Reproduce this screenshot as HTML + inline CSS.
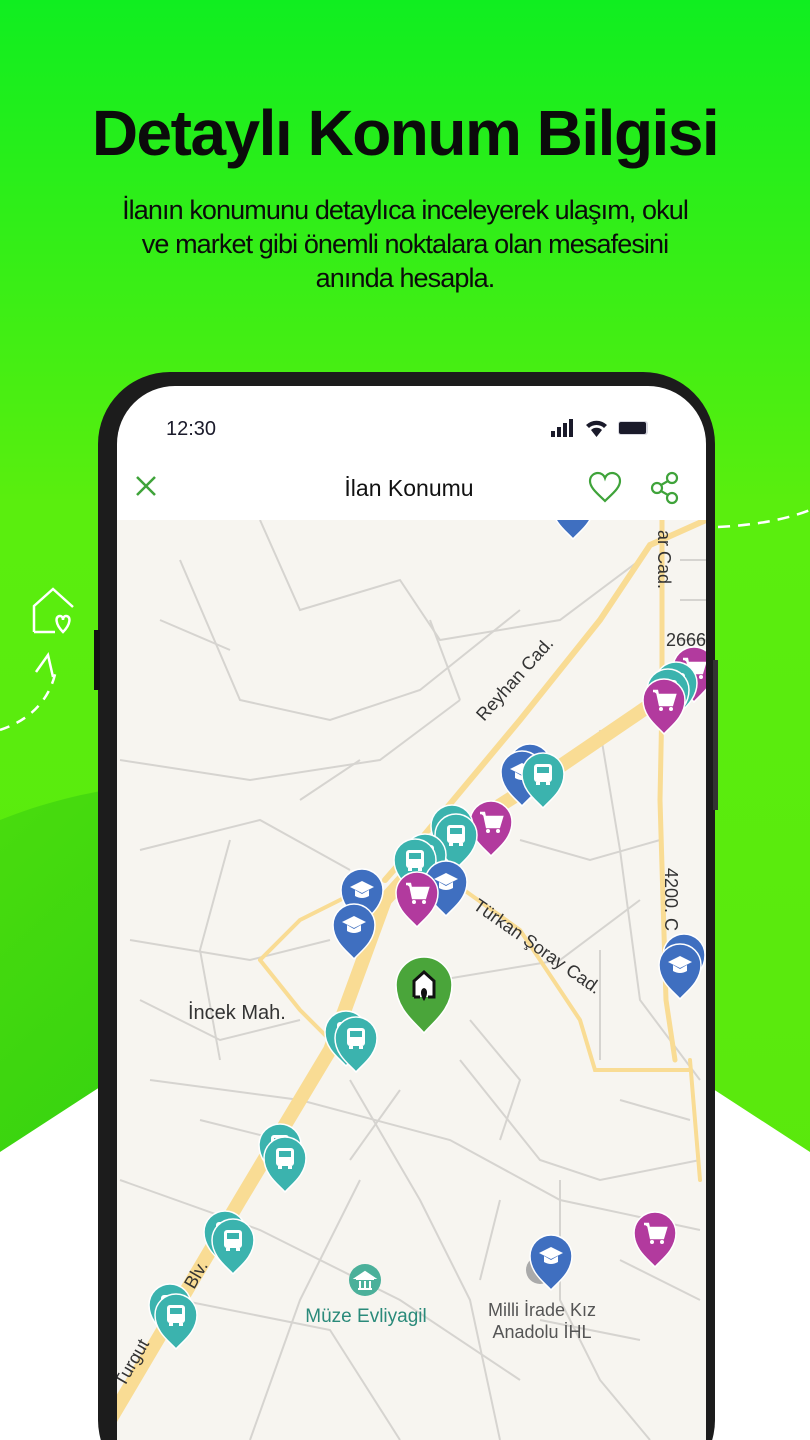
<!DOCTYPE html>
<html><head><meta charset="utf-8"><style>
*{margin:0;padding:0;box-sizing:border-box}
body{width:810px;height:1440px;overflow:hidden;position:relative;font-family:"Liberation Sans",sans-serif;background:#fff}
.bg{position:absolute;left:0;top:0;width:810px;height:1440px}
h1{position:absolute;top:96px;left:0;width:810px;text-align:center;font-size:64px;font-weight:bold;color:#0b0b0b;letter-spacing:-1.5px}
p.sub{position:absolute;top:193px;left:0;width:810px;text-align:center;font-size:27px;line-height:34px;color:#0b0b0b;letter-spacing:-0.9px}
</style></head><body>
<svg class="bg" viewBox="0 0 810 1440" xmlns="http://www.w3.org/2000/svg">
<defs>
<linearGradient id="g" x1="0" y1="0" x2="0" y2="1"><stop offset="0" stop-color="#10ee20"/><stop offset="0.35" stop-color="#5aee0e"/><stop offset="1" stop-color="#5ae60c"/></linearGradient>
<linearGradient id="g2" x1="0" y1="0" x2="1" y2="1"><stop offset="0" stop-color="#45d80e"/><stop offset="1" stop-color="#22c812"/></linearGradient>
</defs>
<rect width="810" height="1440" fill="url(#g)"/>
<path d="M0,820 C150,760 300,780 400,840 L100,1087 L0,1152Z" fill="url(#g2)" opacity="0.8"/>
<path d="M0,1152 L100,1087 L710,1087 L810,1152 L810,1440 L0,1440Z" fill="#fff"/>
<path d="M0,730 C30,720 50,700 56,670" stroke="#fff" stroke-width="2.5" fill="none" stroke-dasharray="10,8"/>
<path d="M36,672 L48,655 L53,677" stroke="#fff" stroke-width="2.5" fill="none"/>
<path d="M718,527 C760,525 790,518 810,510" stroke="#fff" stroke-width="2.5" fill="none" stroke-dasharray="12,8"/>
<g stroke="#fff" stroke-width="2.5" fill="none"><path d="M34,632 L34,606 L53,589 L73,607"/><path d="M34,632 L55,632"/><path d="M63,632 C55,624 55,616 60,616 C62,616 63,618 63,620 C63,618 64,616 66,616 C71,616 71,624 63,632Z"/></g>
<rect x="98" y="372" width="617" height="1120" rx="72" fill="#1c1c1c"/>
<rect x="94" y="630" width="6" height="60" fill="#111"/><rect x="713" y="660" width="5" height="150" fill="#333"/>
<rect x="117" y="386" width="589" height="1100" rx="58" fill="#fff"/>
<text x="166" y="435" font-size="20" fill="#1a1a2a" font-family="Liberation Sans">12:30</text>
<g fill="#1a1a2a"><rect x="551" y="431" width="4" height="6"/><rect x="557" y="427" width="4" height="10"/><rect x="563" y="423" width="4" height="14"/><rect x="569" y="419" width="4" height="18"/>
<path d="M586,425 A15,15 0 0 1 607,425 L604,428 A11,11 0 0 0 589,428Z"/><path d="M591,430 A8,8 0 0 1 602,430 L596.5,437Z"/>
<rect x="618" y="421" width="30" height="14" rx="3" fill="#d8d8e0"/><rect x="619" y="422" width="27" height="12" rx="2"/></g>
<path d="M137,477 L155,495 M155,477 L137,495" stroke="#3fa33a" stroke-width="2.5"/>
<text x="409" y="496" font-size="23" text-anchor="middle" fill="#111" font-family="Liberation Sans">İlan Konumu</text>
<path d="M605,501 C598,494 590,488 590,481 C590,476 594,473 598,473 C601,473 604,475 605,478 C606,475 609,473 612,473 C616,473 620,476 620,481 C620,488 612,494 605,501Z" stroke="#3fa33a" stroke-width="2.2" fill="none"/>
<g stroke="#3fa33a" stroke-width="2.2" fill="none"><circle cx="672" cy="478" r="5"/><circle cx="657" cy="488" r="5"/><circle cx="672" cy="498" r="5"/><path d="M661,485 L668,481 M661,491 L668,495"/></g>
<clipPath id="mc"><path d="M117,520 H706 V1440 H117Z"/></clipPath>
<g clip-path="url(#mc)">
<rect x="117" y="520" width="589" height="920" fill="#f7f5f0"/>
<g stroke="#d6d4d0" stroke-width="2" fill="none">
<path d="M260,520 L300,610 L400,580 L440,640 L560,620 L640,560"/><path d="M180,560 L240,700 L330,720 L420,690 L520,610"/>
<path d="M120,760 L250,780 L380,760 L460,700"/><path d="M140,850 L260,820 L350,870"/><path d="M130,940 L250,960 L330,940"/>
<path d="M150,1080 L300,1100 L450,1140 L560,1200 L700,1230"/><path d="M120,1180 L260,1230 L400,1300 L520,1380"/>
<path d="M350,1080 L420,1200 L470,1300 L500,1440"/><path d="M460,1060 L540,1160 L600,1180 L700,1160"/>
<path d="M560,1180 L560,1300 L600,1380 L650,1440"/><path d="M600,730 L620,850 L640,1000 L700,1080"/><path d="M520,840 L590,860 L660,840"/>
<path d="M440,980 L560,960 L640,900"/><path d="M600,950 L600,1060"/><path d="M360,1180 L300,1300 L250,1440"/>
<path d="M180,1300 L330,1330 L400,1440"/><path d="M140,1000 L220,1040 L300,1020"/><path d="M680,560 H706 M680,600 H706 M680,640 H706"/>
<path d="M470,1020 L520,1080 L500,1140"/><path d="M400,1090 L350,1160"/><path d="M230,840 L200,950 L220,1060"/><path d="M620,1260 L700,1300"/><path d="M430,620 L460,700"/>
<path d="M160,620 L230,650 M300,800 L360,760 M200,1120 L280,1140 M500,1200 L480,1280 M620,1100 L690,1120 M540,1320 L640,1340"/>
</g>
<g fill="none" stroke="#f9dc94" stroke-linecap="round">
<path d="M110,1420 L240,1200 L330,1050 L385,900 L430,850 L540,780 L650,705 L706,680" stroke-width="14"/>
<path d="M385,880 L420,840 L520,720 L600,620 L650,545 L706,520" stroke-width="6"/>
<path d="M662,520 L662,700 L660,800 L666,1000 L675,1060" stroke-width="5"/>
<path d="M450,880 L520,930 L580,1020 L595,1070 L690,1070" stroke-width="4"/>
<path d="M260,960 L300,920 L360,890" stroke-width="4"/><path d="M260,960 L300,1010 L330,1040" stroke-width="4"/>
<path d="M690,1060 L700,1180" stroke-width="4"/>
</g>
<g font-family="Liberation Sans" font-size="18" fill="#333">
<text transform="translate(484,722) rotate(-48)">Reyhan Cad.</text>
<text transform="translate(472,908) rotate(35)">Türkan Şoray Cad.</text>
<text transform="translate(658,530) rotate(90)">ar Cad.</text>
<text transform="translate(665,868) rotate(90)">4200. C</text>
<text x="666" y="646">2666</text>
<text x="188" y="1019" font-size="20">İncek Mah.</text>
<text transform="translate(124,1388) rotate(-60)">Turgut</text><text transform="translate(194,1290) rotate(-60)">Blv.</text>
<text x="366" y="1322" font-size="19" fill="#2a8a7a" text-anchor="middle">Müze Evliyagil</text>
<text x="542" y="1316" font-size="18" fill="#555" text-anchor="middle">Milli İrade Kız</text>
<text x="542" y="1338" font-size="18" fill="#555" text-anchor="middle">Anadolu İHL</text>
</g>
<circle cx="365" cy="1280" r="16" fill="#4bb09a"/><path d="M356,1279 H374 M358,1289 H372 M360,1281 V1288 M365,1281 V1288 M370,1281 V1288 M356,1278 L365,1272 L374,1278Z" stroke="#fff" stroke-width="2" fill="#fff"/>
<circle cx="540" cy="1270" r="14" fill="#aaa"/>
<defs>
<path id="pin" d="M0,34 C-6,27 -21,17 -21,0 A21,21 0 1 1 21,0 C21,17 6,27 0,34Z" stroke="#fff" stroke-width="1.5"/>
<g id="bus"><use href="#pin" fill="#3bb3ae"/><rect x="-9" y="-10" width="18" height="18" rx="3" fill="#fff"/><rect x="-6" y="-7" width="12" height="6" fill="#3bb3ae"/><rect x="-7" y="8" width="4" height="3" fill="#fff"/><rect x="3" y="8" width="4" height="3" fill="#fff"/></g>
<g id="cart"><use href="#pin" fill="#b23a9e"/><path d="M-11,-9 H-7 L-4,5 H8 L11,-5 H-6" stroke="#fff" stroke-width="2.5" fill="#fff"/><circle cx="-3" cy="9" r="2" fill="#fff"/><circle cx="7" cy="9" r="2" fill="#fff"/></g>
<g id="sch"><use href="#pin" fill="#3f6fc0"/><path d="M-12,-3 L0,-9 L12,-3 L0,3Z" fill="#fff"/><path d="M-7,0 V6 Q0,10 7,6 V0 L0,4Z" fill="#fff"/></g>
</defs>
<use href="#sch" x="573" y="505"/>
<use href="#cart" x="694" y="668"/><use href="#bus" x="676" y="683"/><use href="#bus" x="668" y="690"/><use href="#cart" x="664" y="700"/>
<use href="#sch" x="530" y="765"/><use href="#sch" x="522" y="772"/><use href="#bus" x="543" y="774"/>
<use href="#cart" x="491" y="822"/><use href="#bus" x="452" y="826"/><use href="#bus" x="456" y="835"/>
<use href="#bus" x="425" y="855"/><use href="#bus" x="415" y="860"/>
<use href="#sch" x="446" y="882"/><use href="#cart" x="417" y="893"/>
<use href="#sch" x="362" y="890"/><use href="#sch" x="354" y="925"/>
<use href="#bus" x="346" y="1032"/><use href="#bus" x="356" y="1038"/>
<use href="#bus" x="280" y="1145"/><use href="#bus" x="285" y="1158"/>
<use href="#bus" x="225" y="1232"/><use href="#bus" x="233" y="1240"/>
<use href="#bus" x="170" y="1305"/><use href="#bus" x="176" y="1315"/>
<use href="#sch" x="551" y="1256"/><use href="#cart" x="655" y="1233"/>
<use href="#sch" x="684" y="955"/><use href="#sch" x="680" y="965"/>
<g transform="translate(424,985)"><path d="M0,48 C-8,38 -28,25 -28,0 A28,28 0 1 1 28,0 C28,25 8,38 0,48Z" fill="#4aa53a" stroke="#fff" stroke-width="1.5"/><path d="M-10,12 V-4 L0,-13 L10,-4 V12 H4 M-4,12 H-10" stroke="#111" stroke-width="3" fill="#fff"/><path d="M0,16 C-4,10 -4,4 0,3 C4,4 4,10 0,16Z" fill="#111"/></g>
</g>
</svg>
<h1>Detaylı Konum Bilgisi</h1>
<p class="sub">İlanın konumunu detaylıca inceleyerek ulaşım, okul<br>ve market gibi önemli noktalara olan mesafesini<br>anında hesapla.</p>
</body></html>
